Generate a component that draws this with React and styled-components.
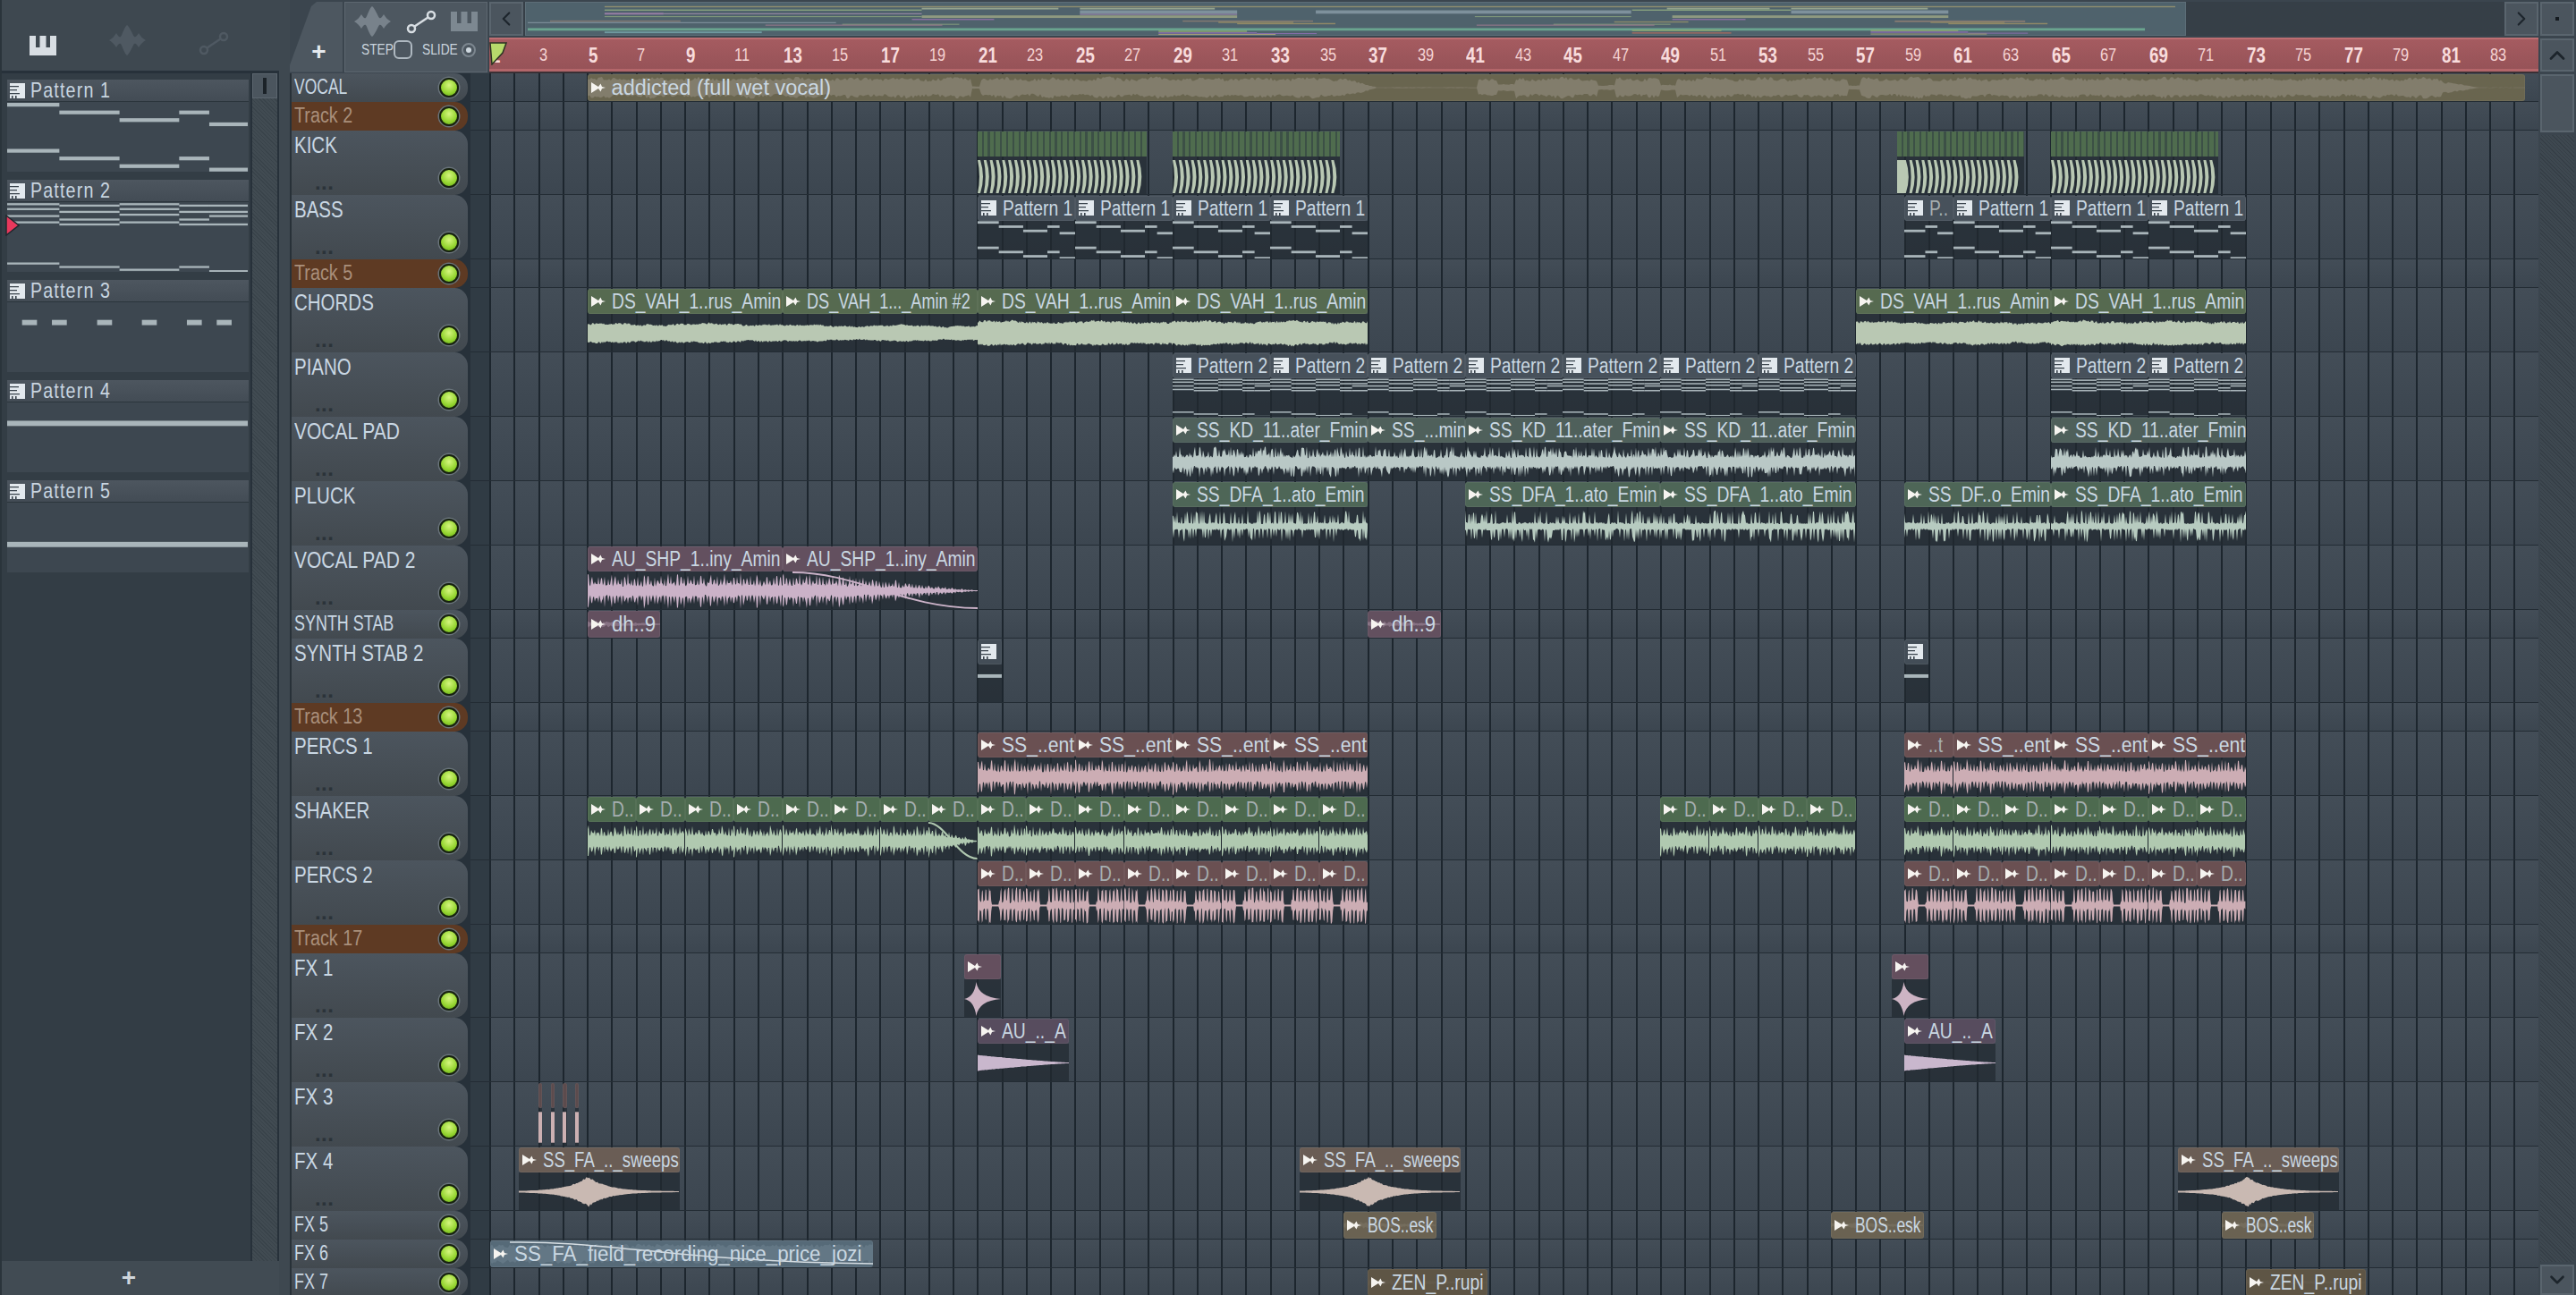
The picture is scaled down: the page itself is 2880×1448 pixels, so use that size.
import React from "react";
import styled, { createGlobalStyle } from "styled-components";
import { ChevronLeft, ChevronRight, ChevronUp, ChevronDown } from "lucide-react";

const BAR = 27.27;
const FONT = '"Liberation Sans", Arial, sans-serif';
const barX = (bar) => 1 + (bar - 1) * BAR;

const Global = createGlobalStyle`
  html, body { margin: 0; padding: 0; background: #3b454e; overflow: hidden; }
  * { box-sizing: border-box; }
`;

const Page = styled.div`
  width: 2880px;
  height: 1448px;
  display: flex;
  overflow: hidden;
  background: #3b454e;
  font-family: ${FONT};
`;

/* the app font is tall and narrow, every label gets squeezed from its left edge */
const Squeezed = styled.span`
  display: inline-block;
  flex: none;
  white-space: nowrap;
  transform-origin: 0 50%;
  transform: scaleX(${(p) => p.$x || 0.82});
`;

/* ---------- left picker panel ---------- */

const Picker = styled.div`
  width: 312px;
  flex: none;
  display: flex;
  flex-direction: column;
  border-left: 2px solid #2a343b;
`;

const PickerTools = styled.div`
  height: 82px;
  flex: none;
  display: flex;
  align-items: flex-end;
  padding: 0 0 17px 31px;
  gap: 59px;
  border-bottom: 3px solid #27313a;
  background: #3e4850;
`;

const PickerBody = styled.div`
  flex: 1;
  display: flex;
  background: #333d45;
  border-right: 2px solid #27313a;
`;

const PatternList = styled.div`
  width: 278px;
  flex: none;
  padding: 7px 0 0 6px;
  position: relative;
`;

const PatternItem = styled.div`
  width: 270px;
  margin-bottom: 8px;
`;

const PatternHead = styled.div`
  height: 25px;
  display: flex;
  align-items: center;
  gap: 6px;
  padding-left: 3px;
  background: linear-gradient(#4d565f, #434c55);
  border-bottom: 1px solid #2b353c;
  color: #c8d5e0;
  font-size: 24px;
  letter-spacing: 1.4px;
`;

const PatternBody = styled.div`
  height: 79px;
  background: #3d4750;
  border-bottom: 1px solid #333d45;
`;

const PlayArrow = styled.svg`
  position: absolute;
  left: 4px;
  top: 158px;
`;

const HatchTrack = styled.div`
  flex: 1;
  background: repeating-linear-gradient(45deg, #39434a 0 1px, #414b52 1px 3px);
`;

const PickerScroll = styled.div`
  width: 30px;
  flex: none;
  display: flex;
  flex-direction: column;
  border-left: 2px solid #27313a;
`;

const PickerThumb = styled.div`
  height: 28px;
  flex: none;
  display: flex;
  justify-content: center;
  align-items: center;
  background: #4b555e;
  border: 1px solid #5b656e;
  &::after {
    content: "";
    width: 4px;
    height: 18px;
    background: #1b2228;
  }
`;

const PickerFoot = styled.div`
  height: 38px;
  flex: none;
  display: flex;
  align-items: center;
  justify-content: center;
  padding-right: 26px;
  background: #414b53;
  color: #cfd6dc;
  font: bold 28px "Liberation Sans", sans-serif;
`;

const Divider = styled.div`
  width: 12px;
  flex: none;
  background: #3e4850;
`;

/* ---------- top bar ---------- */

const Main = styled.div`
  flex: 1;
  min-width: 0;
  display: flex;
  flex-direction: column;
`;

const TopBar = styled.div`
  height: 81.5px;
  flex: none;
  display: flex;
  gap: 2px;
  padding-top: 2px;
`;

const AddTab = styled.div`
  width: 59px;
  flex: none;
  display: flex;
  align-items: flex-end;
  justify-content: center;
  padding: 0 0 9px 6px;
  margin-bottom: 1px;
  background: #4d5760;
  clip-path: polygon(0 100%, 0 90%, 24px 5px, 30px 0, 100% 0, 100% 100%);
  color: #e4e9ee;
  font: bold 28px/1 "Liberation Sans", sans-serif;
`;

const ToolBox = styled.div`
  width: 160px;
  flex: none;
  margin-bottom: 1px;
  display: flex;
  flex-direction: column;
  background: #4d5760;
  border: 1px solid #5d6770;
`;

const ToolIcons = styled.div`
  height: 42px;
  display: flex;
  align-items: center;
  padding: 0 10px;
  justify-content: space-between;
`;

const ToolOptions = styled.div`
  display: flex;
  align-items: center;
  padding-left: 18px;
  color: #c9d4dd;
  font-size: 16px;
`;

const ToolWord = styled.div`
  width: ${(p) => p.$w}px;
  flex: none;
`;

const StepBox = styled.span`
  width: 21px;
  height: 21px;
  margin: 0 11px 0 4px;
  flex: none;
  border: 2px solid #aeb8c0;
  border-radius: 6px;
`;

const SlideDot = styled.span`
  width: 16px;
  height: 16px;
  margin-left: 7px;
  flex: none;
  border-radius: 50%;
  border: 2px solid #7c868f;
  display: flex;
  align-items: center;
  justify-content: center;
  &::after {
    content: "";
    width: 6px;
    height: 6px;
    border-radius: 50%;
    background: #cfd8df;
  }
`;

const TimelineHead = styled.div`
  flex: 1;
  min-width: 0;
  display: flex;
  flex-direction: column;
`;

const OverviewRow = styled.div`
  height: 38px;
  flex: none;
  display: flex;
  gap: 2px;
  background: #363f47;
`;

const SquareBtn = styled.div`
  width: 38px;
  height: ${(p) => p.$h || 38}px;
  flex: none;
  display: flex;
  align-items: center;
  justify-content: center;
  background: #4b555e;
  border: 2px solid #5a656e;
  color: #1d252c;
`;

const OverviewMap = styled.svg`
  width: 1857px;
  height: 38px;
  flex: none;
  background: #4f626c;
  border: 1px solid #5d6e78;
`;

const OverviewRest = styled.div`
  flex: 1;
`;

const Ruler = styled.div`
  height: 39.5px;
  margin-top: 2px;
  position: relative;
  display: flex;
  padding-left: 1.5px;
  overflow: hidden;
  background: linear-gradient(#a55b60, #955257);
  border-top: 2px solid #bd6e72;
  border-bottom: 2px solid #3a3035;
  box-shadow: inset 0 -3px 0 #b3666a;
`;

const RulerCell = styled.div`
  width: ${BAR * 2}px;
  flex: none;
  display: flex;
  align-items: center;
  color: ${(p) => (p.$major ? "#f8dcdc" : "#f5d3d3")};
  font-size: ${(p) => (p.$major ? 24 : 20)}px;
  font-weight: ${(p) => (p.$major ? 700 : 400)};
`;

const StartMarker = styled.svg`
  position: absolute;
  left: 0;
  top: 3px;
`;

/* ---------- playlist ---------- */

const TrackList = styled.div`
  flex: 1;
  min-height: 0;
  overflow: hidden;
`;

const TrackRow = styled.div`
  height: ${(p) => (p.$tall ? 72 : 32)}px;
  display: flex;
  background: #27313a;
`;

const TrackHeader = styled.div`
  width: 199px;
  flex: none;
  display: flex;
  justify-content: space-between;
  padding: 0 10px 0 3px;
  border-left: 2px solid #283138;
  border-radius: 0 15px 15px 0;
  background: ${(p) => (p.$blank ? "#5e3a23" : "linear-gradient(#4c555e, #42494f)")};
`;

const TrackText = styled.div`
  flex: 1;
  min-width: 0;
  display: flex;
  flex-direction: column;
  justify-content: space-between;
  align-items: flex-start;
`;

const TrackName = styled.div`
  color: ${(p) => (p.$blank ? "#a98f7b" : "#c9d7e3")};
  font-size: ${(p) => (p.$tall ? 25 : 23)}px;
  line-height: ${(p) => (p.$tall ? 33 : 30)}px;
`;

const TrackDots = styled.div`
  margin: 0 0 9px 23px;
  color: #2b3339;
  font: bold 24px/10px "Liberation Sans", sans-serif;
  letter-spacing: 0.4px;
`;

const Led = styled.div`
  width: 22px;
  height: 22px;
  flex: none;
  align-self: ${(p) => (p.$tall ? "flex-end" : "center")};
  margin-bottom: ${(p) => (p.$tall ? 8 : 0)}px;
  border-radius: 50%;
  border: 2px solid #17220f;
  box-shadow: 0 0 0 1.5px #69737a;
  background: radial-gradient(circle at 50% 35%, #d4f57e, #93d42e 60%, #5f9f1a);
`;

const Gutter = styled.div`
  width: 20.5px;
  margin-left: 3px;
  flex: none;
  background: #303b44;
  border-bottom: 1px solid #232c34;
`;

const Lane = styled.div`
  flex: 1;
  position: relative;
  overflow: hidden;
  background-image:
    repeating-linear-gradient(90deg, #1d262e 0 2px, transparent 2px ${BAR}px),
    linear-gradient(#434d57, #3c4650);
  border-bottom: 1.5px solid #232c34;
`;

const ClipRoot = styled.div`
  position: absolute;
  top: 0;
  bottom: 0;
  display: flex;
  flex-direction: column;
`;

const ClipHead = styled.div`
  height: ${(p) => (p.$short ? 30 : 28)}px;
  margin-top: 1px;
  flex: none;
  display: flex;
  align-items: center;
  gap: 7px;
  padding-left: 4px;
  position: relative;
  background: ${(p) => p.$tone};
  border-radius: 3px;
  box-shadow: inset 0 0 0 1px rgba(255, 255, 255, 0.05);
`;

const ClipLabel = styled(Squeezed)`
  position: relative;
  color: ${(p) => (p.$dim ? "#a5aeb0" : "#c9d7e2")};
  font-size: 23.5px;
  line-height: 28px;
`;

const ClipBody = styled.div`
  flex: 1;
  min-height: 0;
  background: rgba(33, 41, 48, 0.72);
`;

const KickHead = styled.div`
  height: 28px;
  margin-top: 1px;
  flex: none;
  background: repeating-linear-gradient(90deg, #4f6c4e 0 4.6px, #3c5046 4.6px ${BAR / 4}px);
`;

const Drawing = styled.svg`
  display: block;
`;

const HeadWave = styled.svg`
  position: absolute;
  left: 0;
  top: 0;
`;

const RightScroll = styled.div`
  width: 42px;
  flex: none;
  display: flex;
  flex-direction: column;
  align-items: center;
  gap: 3px;
  padding-top: 2px;
  background: #3b454e;
`;

const ScrollThumb = styled.div`
  width: 38px;
  height: 65px;
  flex: none;
  background: #4b555e;
  border: 2px solid #5a656e;
`;

const ScrollHatch = styled.div`
  width: 38px;
  flex: 1;
  background: repeating-linear-gradient(45deg, #363f47 0 1px, #3e4850 1px 3px);
`;

const CornerDot = styled.span`
  width: 4px;
  height: 4px;
  background: #151b20;
`;

/* ---------- small drawings ---------- */

function PianoIcon({ color = "#d8dee3" }) {
  return (
    <svg width="30" height="22" viewBox="0 0 30 22">
      <path fill={color} d="M0 0H7V13H11.5V0H18.5V13H23V0H30V22H0Z" />
    </svg>
  );
}

function WaveIcon({ color }) {
  return (
    <svg width="41" height="34" viewBox="0 0 41 34">
      <path
        fill={color}
        d="M0 17C4 15 6 12 8 9C10 12 11 14 13 13C15 10 17 2 20 0C23 2 26 10 28 13C30 14 31 12 33 9C35 12 37 15 41 17C37 19 35 22 33 25C31 22 30 20 28 21C26 24 23 32 20 34C17 32 15 24 13 21C11 20 10 22 8 25C6 22 4 19 0 17Z"
      />
    </svg>
  );
}

function CurveIcon({ color }) {
  return (
    <svg width="34" height="27" viewBox="0 0 34 27" fill="none" stroke={color} strokeWidth="2.5">
      <circle cx="6" cy="21" r="4" />
      <circle cx="28" cy="6" r="4" />
      <path d="M9.5 18.5L24.5 8.5" />
    </svg>
  );
}

function PatternIcon() {
  return (
    <svg width="17" height="17" viewBox="0 0 17 17" style={{ flex: "none", position: "relative" }}>
      <rect width="17" height="17" fill="#e3e9ee" />
      <path fill="#39434c" d="M0 3H10V4.2H0ZM0 7H8V8.2H0ZM0 11H11V12.2H0ZM2 14H3.6V17H2ZM6 14H7.6V17H6Z" />
    </svg>
  );
}

function SampleIcon() {
  return (
    <svg width="16" height="12" viewBox="0 0 16 12" style={{ flex: "none", position: "relative" }}>
      <path fill="#f6f4f0" d="M0 0L8 5L10.5 1.5L12 5L16 6L12 7L10.5 10.5L8 7L0 12Z" />
    </svg>
  );
}

/* ---------- generated shapes ---------- */

function makeRand(seed) {
  let a = seed * 2654435761;
  return () => {
    a = (a + 0x6d2b79f5) | 0;
    let t = Math.imul(a ^ (a >>> 15), 1 | a);
    t = (t + Math.imul(t ^ (t >>> 7), 61 | t)) ^ t;
    return ((t ^ (t >>> 14)) >>> 0) / 4294967296;
  };
}

function wavePath(w, h, amp, seed, step = 1) {
  const rnd = makeRand(seed);
  const top = [];
  const bottom = [];
  const mid = h / 2;
  for (let x = 0; x <= w; x += step) {
    const up = amp(x / w, x, rnd);
    const down = amp(x / w, x, rnd);
    top.push(`${x.toFixed(1)} ${(mid - (up * h) / 2).toFixed(1)}`);
    bottom.unshift(`${x.toFixed(1)} ${(mid + (down * h) / 2).toFixed(1)}`);
  }
  return `M${top.join("L")}L${bottom.join("L")}Z`;
}

const padWave = (level) => (t, x, r) => level * (0.8 + 0.2 * r()) + 0.04 * Math.sin(x / 17) + 0.025 * Math.sin(x / 5);
const spikyWave = (base, peak) => (t, x, r) => {
  const v = r();
  return v > 0.72 ? peak * (0.6 + 0.4 * r()) : base * (0.5 + 0.5 * r());
};
// thin spikes on a thicker core, loudest at the start of each beat
const beatWave = (period, core, peak) => (t, x, r) => {
  const phase = (x % period) / period;
  const env = 0.65 + 0.35 * (1 - phase);
  return x % 3.7 < 1.4 ? peak * env * (0.7 + 0.3 * r()) : core * (0.6 + 0.6 * r());
};
const burstWave = (t, x, r) => {
  if ((x + 30.8) % 54.54 > 46.5) return 0.04;
  return x % 4.2 < 2 ? 0.95 * (0.75 + 0.25 * r()) : 0.12 + 0.2 * r();
};
const fadeWave = (inner, from) => (t, x, r) => {
  const gain = t < from ? 1 : Math.max(0.02, 1 - (t - from) / (1 - from));
  return inner(t, x, r) * gain + 0.012;
};
const spindleWave = (t, x, r) => 0.02 + 0.8 * Math.exp(-Math.abs(t - 0.43) * 8) * (0.85 + 0.15 * r());
const wedgeWave = (t, x, r) => 0.02 + 0.4 * Math.pow(1 - t, 1.2) * (0.94 + 0.06 * r());
const stickWave = () => 0.8;

const vocalEnv = (bar) => {
  if (bar > 82.5) return 0.015;
  if (bar > 81) return 0.015 + (82.5 - bar) * 0.4;
  if (bar > 20.7 && bar < 21.1) return 0.12;
  if (bar > 36 && bar < 37.3) return 0.8 - (bar - 36) * 0.55;
  if (bar >= 37.3 && bar < 41.5) return 0.03;
  if (bar >= 42.3 && bar < 43) return 0.3;
  if (bar >= 46.4 && bar < 47.1) return 0.2;
  if (bar >= 49 && bar < 49.6) return 0.25;
  if (bar >= 56.7 && bar < 57.2) return 0.2;
  return 0.84;
};
const vocalWave = (t, x, r) => {
  const bar = 5 + x / BAR;
  return vocalEnv(bar) * (0.66 + 0.34 * r()) * (0.9 + 0.1 * Math.sin(x / 9));
};
const faintWave = (t, x, r) => 0.05 + 0.25 * (1 - t) * r();
const fieldWave = (t, x, r) => 0.45 + 0.3 * r();

function kickPath(count, h, from = 0) {
  const beat = BAR / 4;
  let d = "";
  for (let i = from; i < count; i++) {
    const x = i * beat;
    d += `M${x.toFixed(1)} 0Q${(x + 4).toFixed(1)} ${h / 2} ${x.toFixed(1)} ${h}L${(x + 3).toFixed(1)} ${h}Q${(x + 9).toFixed(1)} ${h / 2} ${(x + 3).toFixed(1)} 0Z`;
  }
  return d;
}

const seg = [0, 0.217, 0.467, 0.715, 0.84, 1];
const notesFrom = (rows, size) =>
  rows.flatMap((col, i) => col.map((y) => ({ a: seg[i], b: seg[i + 1], y, size })));

const PATTERNS = {
  1: notesFrom([[0.04, 0.7], [0.15, 0.81], [0.26, 0.92], [0.15, 0.81], [0.32, 0.97]], 1),
  2: notesFrom(
    [
      [0.03, 0.1, 0.2, 0.29, 0.88],
      [0.05, 0.14, 0.25, 0.32, 0.93],
      [0.03, 0.1, 0.18, 0.29, 0.97],
      [0.05, 0.14, 0.25, 0.32, 0.93],
      [0.05, 0.14, 0.2, 0.32, 0.99],
    ],
    0.55
  ),
  3: [
    [0.062, 0.124],
    [0.186, 0.248],
    [0.374, 0.436],
    [0.56, 0.622],
    [0.747, 0.809],
    [0.871, 0.933],
  ].map(([a, b]) => ({ a, b, y: 0.29, size: 1.4 })),
  4: [{ a: 0, b: 1, y: 0.3, size: 1.4 }],
  5: [{ a: 0, b: 1, y: 0.6, size: 1.4 }],
};

function NoteRoll({ id, w, h, unit, phase = 0 }) {
  const full = w / (1 - phase);
  return (
    <Drawing width={w} height={h} viewBox={`${phase * full} 0 ${w} ${h}`}>
      {PATTERNS[id].map((n, i) => (
        <rect
          key={i}
          x={n.a * full}
          y={n.y * h - (n.size * unit) / 2}
          width={(n.b - n.a) * full}
          height={n.size * unit}
          fill="#a9b5ba"
        />
      ))}
    </Drawing>
  );
}

/* ---------- clip data ---------- */

const AUTOMATION = (w, h, startX) =>
  `M${startX} 1C${startX + (w - startX) * 0.35} 1 ${startX + (w - startX) * 0.6} ${h - 2} ${w} ${h - 2}`;

const pat = (id, bars, len = 4, extra = {}) =>
  bars.map((at) => ({ at, len, pattern: id, label: `Pattern ${id}`, ...extra }));

const audio = (label, tone, color, at, len, wave, extra = {}) => ({ label, tone, color, at, len, wave, ...extra });

const GREEN = ["#566a50", "#b9c8b3"];
const TEAL = ["#4f605b", "#b9c8c6"];
const PLUCK = ["#4e6657", "#b7cbc0"];
const MAUVE = ["#63505f", "#cbb2c8"];
const RED = ["#6a5052", "#ccadb4"];
const SHK = ["#4d6a4f", "#b0c9b0"];
const BROWN = ["#6a5d55", "#c9b9b2"];
const SAND = ["#6a6252", "#8a8474"];

const evenBars = (from, to) => {
  const list = [];
  for (let b = from; b < to; b += 2) list.push(b);
  return list;
};

const shaker = (at) => {
  const fading = at === 19;
  const wave = beatWave(6.82, 0.38, 0.88);
  return audio("D..", ...SHK, at, 2, fading ? fadeWave(wave, 0.1) : wave, {
    dim: true,
    curve: fading ? [0, 0] : null,
  });
};

const TRACKS = [
  {
    name: "VOCAL",
    fit: 0.76,
    clips: [
      audio("addicted (full wet vocal)", "#69654f", "#827d6c", 5, 79.44, vocalWave, { step: 2, fit: 1 }),
    ],
  },
  { name: "Track 2", blank: true, fit: 0.86 },
  {
    name: "KICK",
    tall: true,
    kicks: [
      [21, 6.92, 0],
      [29, 6.86, 0],
      [58.7, 5.2, 1],
      [65, 6.86, 0],
    ],
  },
  {
    name: "BASS",
    tall: true,
    clips: [
      ...pat(1, [21, 25, 29, 33]),
      { at: 59, len: 2, pattern: 1, label: "P..", dim: true, phase: 0.5 },
      ...pat(1, [61, 65, 69]),
    ],
  },
  { name: "Track 5", blank: true, fit: 0.86 },
  {
    name: "CHORDS",
    tall: true,
    clips: [
      audio("DS_VAH_1..rus_Amin", ...GREEN, 5, 8, padWave(0.5)),
      audio("DS_VAH_1..._Amin #2", ...GREEN, 13, 8, padWave(0.42), { fit: 0.77 }),
      audio("DS_VAH_1..rus_Amin", ...GREEN, 21, 8, padWave(0.64)),
      audio("DS_VAH_1..rus_Amin", ...GREEN, 29, 8, padWave(0.64)),
      audio("DS_VAH_1..rus_Amin", ...GREEN, 57, 8, padWave(0.6)),
      audio("DS_VAH_1..rus_Amin", ...GREEN, 65, 8, padWave(0.64)),
    ],
  },
  { name: "PIANO", tall: true, clips: [...pat(2, [29, 33, 37, 41, 45, 49, 53, 65, 69])] },
  {
    name: "VOCAL PAD",
    tall: true,
    fit: 0.84,
    clips: [
      audio("SS_KD_11..ater_Fmin", ...TEAL, 29, 8, spikyWave(0.4, 0.82)),
      audio("SS_...min", ...TEAL, 37, 4, spikyWave(0.4, 0.82)),
      audio("SS_KD_11..ater_Fmin", ...TEAL, 41, 8, spikyWave(0.4, 0.82)),
      audio("SS_KD_11..ater_Fmin", ...TEAL, 49, 8, spikyWave(0.4, 0.82)),
      audio("SS_KD_11..ater_Fmin", ...TEAL, 65, 8, spikyWave(0.4, 0.82)),
    ],
  },
  {
    name: "PLUCK",
    tall: true,
    clips: [
      audio("SS_DFA_1..ato_Emin", ...PLUCK, 29, 8, spikyWave(0.22, 0.85)),
      audio("SS_DFA_1..ato_Emin", ...PLUCK, 41, 8, spikyWave(0.22, 0.85)),
      audio("SS_DFA_1..ato_Emin", ...PLUCK, 49, 8, spikyWave(0.22, 0.85)),
      audio("SS_DF..o_Emin", ...PLUCK, 59, 6, spikyWave(0.22, 0.85)),
      audio("SS_DFA_1..ato_Emin", ...PLUCK, 65, 8, spikyWave(0.22, 0.85)),
    ],
  },
  {
    name: "VOCAL PAD 2",
    tall: true,
    fit: 0.84,
    clips: [
      audio("AU_SHP_1..iny_Amin", ...MAUVE, 5, 8, beatWave(9, 0.35, 0.95)),
      audio("AU_SHP_1..iny_Amin", ...MAUVE, 13, 8, fadeWave(beatWave(9, 0.35, 0.95), 0.3), { curve: [11, 0] }),
    ],
  },
  {
    name: "SYNTH STAB",
    clips: [
      audio("dh..9", ...MAUVE, 5, 3, faintWave, { faint: true, fit: 0.94 }),
      audio("dh..9", ...MAUVE, 37, 3, faintWave, { faint: true, fit: 0.94 }),
    ],
  },
  {
    name: "SYNTH STAB 2",
    tall: true,
    clips: [
      { at: 21, len: 1, pattern: 4, label: "", head: "#434d57" },
      { at: 59, len: 1, pattern: 4, label: "", head: "#434d57" },
    ],
  },
  { name: "Track 13", blank: true, fit: 0.86 },
  {
    name: "PERCS 1",
    tall: true,
    clips: [21, 25, 29, 33, 61, 65, 69]
      .map((at) => audio("SS_..ent", ...RED, at, 4, beatWave(13.64, 0.36, 0.98), { fit: 0.9 }))
      .concat(audio("..t", ...RED, 59, 2, beatWave(13.64, 0.36, 0.98), { dim: true })),
  },
  {
    name: "SHAKER",
    tall: true,
    clips: [...evenBars(5, 37), ...evenBars(49, 57), ...evenBars(59, 73)].map(shaker),
  },
  {
    name: "PERCS 2",
    tall: true,
    clips: [...evenBars(21, 37), ...evenBars(59, 73)].map((at) =>
      audio("D..", ...RED, at, 2, burstWave, { dim: true, step: 0.8 })
    ),
  },
  { name: "Track 17", blank: true, fit: 0.86 },
  {
    name: "FX 1",
    tall: true,
    clips: [
      audio("", "#644f5e", "#cdb4c4", 20.47, 1.5, null, { star: true }),
      audio("", "#644f5e", "#cdb4c4", 58.47, 1.5, null, { star: true }),
    ],
  },
  {
    name: "FX 2",
    tall: true,
    clips: [
      audio("AU_.._A", "#574c5e", "#c9b7cd", 21, 3.75, wedgeWave),
      audio("AU_.._A", "#574c5e", "#c9b7cd", 59, 3.75, wedgeWave),
    ],
  },
  {
    name: "FX 3",
    tall: true,
    clips: [3, 3.5, 4, 4.5].map((at) => audio("", "#5c4b4d", "#ccb0b2", at, 0.16, stickWave, { bare: true })),
  },
  {
    name: "FX 4",
    tall: true,
    clips: [2.2, 34.2, 70.2].map((at) => audio("SS_FA_.._sweeps", ...BROWN, at, 6.6, spindleWave, { fit: 0.79 })),
  },
  {
    name: "FX 5",
    clips: [36, 56, 72].map((at) => audio("BOS..esk", ...SAND, at, 3.8, faintWave, { faint: true, fit: 0.74 })),
  },
  {
    name: "FX 6",
    clips: [
      audio("SS_FA_field_recording_nice_price_jozi", "#566a78", "#637785", 1, 15.7, fieldWave, {
        field: true,
        step: 2,
        fit: 0.95,
      }),
    ],
  },
  { name: "FX 7", clips: [37, 73].map((at) => audio("ZEN_P..rupi", "#5e5545", "#6b6252", at, 4.9, faintWave, { faint: true })) },
];

const OVERVIEW = [
  [674, 4, 2432, 1.5, "#8f8d6e"],
  [1029, 6, 1182, 2, "#93a28e"],
  [1206, 6, 1357, 2, "#93a28e"],
  [1863, 6, 1978, 2, "#93a28e"],
  [2002, 6, 2155, 2, "#93a28e"],
  [674, 8, 1029, 1.5, "#86a07e"],
  [1824, 8, 2002, 1.5, "#86a07e"],
  [1206, 9, 1382, 4, "#7e919c"],
  [1470, 9, 1823, 4, "#7e919c"],
  [2002, 9, 2178, 4, "#7e919c"],
  [674, 12, 740, 2, "#9a7fa8"],
  [740, 12.5, 1029, 1, "#a58fb0"],
  [1206, 13, 1382, 1.5, "#8c7fa0"],
  [674, 16, 1029, 1, "#86a07e"],
  [1648, 16, 1823, 1, "#86a07e"],
  [1029, 15, 1382, 3, "#8f9a80"],
  [1869, 15, 2178, 3, "#8f9a80"],
  [1018, 19, 1110, 1.5, "#8a6fa0"],
  [1869, 19, 1951, 1.5, "#8a6fa0"],
  [613, 21, 759, 1.5, "#857a72"],
  [1321, 21, 1467, 1.5, "#857a72"],
  [2118, 21, 2264, 2, "#857a72"],
  [1804, 22, 1887, 1.5, "#8a8a6a"],
  [1361, 22.5, 1445, 1.5, "#928a66"],
  [2158, 22.5, 2241, 1.5, "#928a66"],
  [588, 23, 933, 1, "#8a9aa6"],
  [1382, 24, 1492, 1.5, "#928a66"],
  [2178, 24, 2289, 1.5, "#928a66"],
  [940, 25, 1071, 1, "#86a07e"],
  [1736, 25, 1867, 1, "#86a07e"],
  [854, 26, 1052, 1, "#a07a90"],
  [1650, 26, 1849, 1, "#a07a90"],
  [588, 30, 2398, 3, "#6aa48f"],
  [674, 34, 850, 2, "#6f9aa0"],
  [1294, 33, 1393, 1.5, "#8faa70"],
  [1824, 32, 1924, 1.5, "#8faa70"],
  [2091, 32, 2189, 1.5, "#8faa70"],
  [1294, 35, 1404, 1.5, "#8a6fb0"],
  [2091, 34, 2200, 1.5, "#8a6fb0"],
  [2200, 35.5, 2267, 1, "#8a6fb0"],
  [1404, 36, 1471, 1, "#8a6fb0"],
  [1294, 37, 1425, 1, "#a8a078"],
  [2091, 36.5, 2221, 1, "#a8a078"],
  [1824, 35, 1935, 1.5, "#a06a60"],
];

/* ---------- clips ---------- */

function WaveShape({ clip, w, h, Svg = Drawing }) {
  const seed = Math.round(clip.at * 37) + clip.label.length;
  const d = React.useMemo(
    () => wavePath(w, h, clip.wave, seed, clip.step || 1),
    [w, h, seed, clip]
  );
  return (
    <Svg width={w} height={h}>
      <path d={d} fill={clip.color} opacity={clip.faint ? 0.35 : 1} />
      {clip.curve && (
        <path d={AUTOMATION(w, h, clip.curve[0])} fill="none" stroke={clip.color} strokeWidth="2" />
      )}
      {clip.field && (
        <path d={`M22 2C${w * 0.3} 0 ${w * 0.5} ${h - 6} ${w} ${h - 4}`} fill="none" stroke="#d5dde2" strokeWidth="1.5" />
      )}
    </Svg>
  );
}

function StarShape({ color }) {
  return (
    <Drawing width="41" height="43">
      <path fill={color} d="M0 22Q11 20 13.5 3Q16 20 41 22Q16 24 13.5 41Q11 24 0 22Z" />
    </Drawing>
  );
}

function Clip({ clip, short }) {
  const w = clip.len * BAR;
  const isPattern = !!clip.pattern;
  return (
    <ClipRoot style={{ left: barX(clip.at), width: w }}>
      <ClipHead $short={short} $tone={isPattern ? clip.head || "#47515b" : clip.tone}>
        {short && clip.wave && <WaveShape clip={clip} w={w} h={30} Svg={HeadWave} />}
        {!clip.bare && (isPattern ? <PatternIcon /> : <SampleIcon />)}
        {clip.label && (
          <ClipLabel $dim={clip.dim} $x={clip.fit}>
            {clip.label}
          </ClipLabel>
        )}
      </ClipHead>
      {!short && (
        <ClipBody>
          {isPattern && <NoteRoll id={clip.pattern} w={w} h={43} unit={2.8} phase={clip.phase} />}
          {clip.star && <StarShape color={clip.color} />}
          {clip.wave && <WaveShape clip={clip} w={w} h={43} />}
        </ClipBody>
      )}
    </ClipRoot>
  );
}

function KickClip({ at, len, from }) {
  const w = len * BAR;
  return (
    <ClipRoot style={{ left: barX(at), width: w }}>
      <KickHead />
      <ClipBody>
        <Drawing width={w} height="43">
          {from > 0 && <rect y="4" width="9" height="37" fill="#b9c8b3" />}
          <g transform="translate(0 4)">
            <path d={kickPath(Math.floor(w / (BAR / 4)), 37, from)} fill="#b9c8b3" />
          </g>
        </Drawing>
      </ClipBody>
    </ClipRoot>
  );
}

function Track({ track }) {
  const tall = !!track.tall;
  return (
    <TrackRow $tall={tall}>
      <TrackHeader $blank={track.blank}>
        <TrackText>
          <TrackName $tall={tall} $blank={track.blank}>
            <Squeezed $x={track.fit || (tall ? 0.82 : 0.78)}>{track.name}</Squeezed>
          </TrackName>
          {tall && <TrackDots>...</TrackDots>}
        </TrackText>
        <Led $tall={tall} />
      </TrackHeader>
      <Gutter />
      <Lane>
        {(track.kicks || []).map(([at, len, from]) => (
          <KickClip key={at} at={at} len={len} from={from} />
        ))}
        {(track.clips || []).map((clip, i) => (
          <Clip key={i} clip={clip} short={!tall} />
        ))}
      </Lane>
    </TrackRow>
  );
}

function Overview() {
  return (
    <OverviewMap viewBox="586 0 1857 38" preserveAspectRatio="none">
      {OVERVIEW.map(([a, y, b, h, color], i) => (
        <rect key={i} x={a} y={y} width={b - a} height={h} fill={color} />
      ))}
    </OverviewMap>
  );
}

export default function App() {
  const rulerBars = [];
  for (let b = 1; b < 85; b += 2) rulerBars.push(b);
  return (
    <Page>
      <Global />
      <Picker>
        <PickerTools>
          <PianoIcon />
          <WaveIcon color="#4f5962" />
          <CurveIcon color="#4f5962" />
        </PickerTools>
        <PickerBody>
          <PatternList>
            {[1, 2, 3, 4, 5].map((id) => (
              <PatternItem key={id}>
                <PatternHead>
                  <PatternIcon />
                  <Squeezed>Pattern {id}</Squeezed>
                </PatternHead>
                <PatternBody>
                  <NoteRoll id={id} w={269} h={78} unit={4.2} />
                </PatternBody>
              </PatternItem>
            ))}
            <PlayArrow width="16" height="24" viewBox="0 0 16 24">
              <path d="M1 1L15 12L1 23Z" fill="#e8385c" stroke="#20282e" strokeWidth="1.5" />
            </PlayArrow>
          </PatternList>
          <PickerScroll>
            <PickerThumb />
            <HatchTrack />
          </PickerScroll>
        </PickerBody>
        <PickerFoot>+</PickerFoot>
      </Picker>
      <Divider />
      <Main>
        <TopBar>
          <AddTab>+</AddTab>
          <ToolBox>
            <ToolIcons>
              <WaveIcon color="#78828b" />
              <CurveIcon color="#d8dee3" />
              <PianoIcon color="#7d8891" />
            </ToolIcons>
            <ToolOptions>
              <ToolWord $w={32}>
                <Squeezed $x={0.86}>STEP</Squeezed>
              </ToolWord>
              <StepBox />
              <ToolWord $w={37}>
                <Squeezed $x={0.86}>SLIDE</Squeezed>
              </ToolWord>
              <SlideDot />
            </ToolOptions>
          </ToolBox>
          <TimelineHead>
            <OverviewRow>
              <SquareBtn>
                <ChevronLeft size={26} strokeWidth={2} />
              </SquareBtn>
              <Overview />
              <OverviewRest />
              <SquareBtn>
                <ChevronRight size={26} strokeWidth={2} />
              </SquareBtn>
            </OverviewRow>
            <Ruler>
              {rulerBars.map((b) => (
                <RulerCell key={b} $major={b % 4 === 1}>
                  <Squeezed $x={b % 4 === 1 ? 0.78 : 0.82}>{b}</Squeezed>
                </RulerCell>
              ))}
              <StartMarker width="20" height="26" viewBox="0 0 20 26">
                <path d="M1 1H19L15 12L3 25Z" fill="#b7d96b" stroke="#2c3323" strokeWidth="1.5" />
              </StartMarker>
            </Ruler>
          </TimelineHead>
        </TopBar>
        <TrackList>
          {TRACKS.map((t) => (
            <Track key={t.name} track={t} />
          ))}
        </TrackList>
      </Main>
      <RightScroll>
        <SquareBtn>
          <CornerDot />
        </SquareBtn>
        <SquareBtn $h={37}>
          <ChevronUp size={28} strokeWidth={2.4} />
        </SquareBtn>
        <ScrollThumb />
        <ScrollHatch />
        <SquareBtn $h={34}>
          <ChevronDown size={26} strokeWidth={2.4} />
        </SquareBtn>
      </RightScroll>
    </Page>
  );
}
